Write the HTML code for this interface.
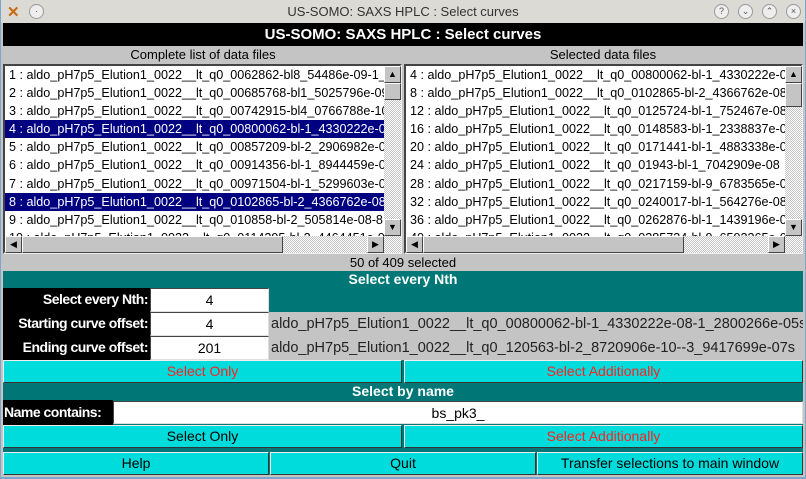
<!DOCTYPE html>
<html><head><meta charset="utf-8"><style>
*{box-sizing:border-box;margin:0;padding:0}
body{width:806px;height:479px;overflow:hidden;background:#7fa6c9;font-family:"Liberation Sans",sans-serif;position:relative}
.abs{position:absolute}
#win{left:1px;top:0;width:804px;height:477px;background:#c4c4c4}
#tb{left:1px;top:0;width:804px;height:23px;background:#dcdad5;font-size:13px;color:#333;text-align:center;line-height:23px}
.circ{width:15px;height:15px;border-radius:50%;border:1px solid #999;background:#eee;top:4px;font-size:9px;line-height:13px;text-align:center;color:#555}
#hdr{left:3px;top:23px;width:800px;height:23px;background:#000;color:#fff;font-weight:bold;font-size:15px;text-align:center;line-height:23px}
.lab{top:46px;height:18px;font-size:13px;text-align:center;line-height:18px;color:#000}
.list{top:64px;height:190px;background:#fff;border:2px solid;border-color:#444 #eee #eee #444;overflow:hidden;padding-top:0px}
.row{height:18.1px;line-height:18.1px;font-size:12.6px;white-space:nowrap;padding-left:4px;color:#000}
.sel{background:#000080;color:#fff}
.vs{width:17px;background:repeating-conic-gradient(#c4c4c4 0 25%,#fff 0 50%) 0 0/2px 2px}
.hs{height:17px;background:repeating-conic-gradient(#c4c4c4 0 25%,#fff 0 50%) 0 0/2px 2px}
.btnb{background:#c4c4c4;border:1px solid;border-color:#fff #444 #444 #fff;font-size:9px;text-align:center;line-height:14px}
.teal{background:#007777}
.blk{background:#000;color:#fff;font-size:14px;font-weight:bold;letter-spacing:-0.5px;text-align:right;padding-right:2px;line-height:23px;white-space:nowrap}
.inp{background:#fff;border:1px solid;border-color:#444 #ddd #ddd #444;text-align:center;font-size:14px;line-height:22px}
.cb{background:#00dcdc;border:1px solid;border-color:#eee #333 #333 #eee;text-align:center;font-size:14px;line-height:20px;color:#000}
.red{color:#ff2020}
</style></head><body>
<div id="win" class="abs"></div>
<div id="tb" class="abs">US-SOMO: SAXS HPLC : Select curves</div>
<div class="abs" style="left:7px;top:3px;font-size:15px;color:#c86a10;font-weight:bold">✕</div>
<div class="abs circ" style="left:29px">·</div>
<div class="abs circ" style="left:714px">?</div>
<div class="abs circ" style="left:738px">⌄</div>
<div class="abs circ" style="left:762px">⌃</div>
<div class="abs circ" style="left:786px">×</div>
<div id="hdr" class="abs">US-SOMO: SAXS HPLC : Select curves</div>
<div class="abs lab" style="left:3px;width:400px">Complete list of data files</div>
<div class="abs lab" style="left:404px;width:398px">Selected data files</div>

<div class="abs list" style="left:3px;width:399px">
<div class="row">1 : aldo_pH7p5_Elution1_0022__lt_q0_0062862-bl8_54486e-09-1_</div>
<div class="row">2 : aldo_pH7p5_Elution1_0022__lt_q0_00685768-bl1_5025796e-09</div>
<div class="row">3 : aldo_pH7p5_Elution1_0022__lt_q0_00742915-bl4_0766788e-10</div>
<div class="row sel">4 : aldo_pH7p5_Elution1_0022__lt_q0_00800062-bl-1_4330222e-08</div>
<div class="row">5 : aldo_pH7p5_Elution1_0022__lt_q0_00857209-bl-2_2906982e-08</div>
<div class="row">6 : aldo_pH7p5_Elution1_0022__lt_q0_00914356-bl-1_8944459e-08</div>
<div class="row">7 : aldo_pH7p5_Elution1_0022__lt_q0_00971504-bl-1_5299603e-08</div>
<div class="row sel">8 : aldo_pH7p5_Elution1_0022__lt_q0_0102865-bl-2_4366762e-08</div>
<div class="row">9 : aldo_pH7p5_Elution1_0022__lt_q0_010858-bl-2_505814e-08-8</div>
<div class="row">10 : aldo_pH7p5_Elution1_0022__lt_q0_0114295-bl-2_4464451e-08</div>
</div>
<div class="abs vs" style="left:384px;top:66px;height:170px"></div>
<div class="abs btnb" style="left:384px;top:66px;width:17px;height:17px">▲</div>
<div class="abs btnb" style="left:384px;top:83px;width:17px;height:17px"></div>
<div class="abs btnb" style="left:384px;top:219px;width:17px;height:17px">▼</div>
<div class="abs hs" style="left:5px;top:236px;width:396px"></div>
<div class="abs btnb" style="left:5px;top:236px;width:17px;height:17px">◀</div>
<div class="abs btnb" style="left:22px;top:236px;width:261px;height:17px"></div>
<div class="abs btnb" style="left:367px;top:236px;width:17px;height:17px">▶</div>

<div class="abs list" style="left:404px;width:399px">
<div class="row">4 : aldo_pH7p5_Elution1_0022__lt_q0_00800062-bl-1_4330222e-08</div>
<div class="row">8 : aldo_pH7p5_Elution1_0022__lt_q0_0102865-bl-2_4366762e-08</div>
<div class="row">12 : aldo_pH7p5_Elution1_0022__lt_q0_0125724-bl-1_752467e-08</div>
<div class="row">16 : aldo_pH7p5_Elution1_0022__lt_q0_0148583-bl-1_2338837e-08</div>
<div class="row">20 : aldo_pH7p5_Elution1_0022__lt_q0_0171441-bl-1_4883338e-08</div>
<div class="row">24 : aldo_pH7p5_Elution1_0022__lt_q0_01943-bl-1_7042909e-08</div>
<div class="row">28 : aldo_pH7p5_Elution1_0022__lt_q0_0217159-bl-9_6783565e-09</div>
<div class="row">32 : aldo_pH7p5_Elution1_0022__lt_q0_0240017-bl-1_564276e-08</div>
<div class="row">36 : aldo_pH7p5_Elution1_0022__lt_q0_0262876-bl-1_1439196e-08</div>
<div class="row">40 : aldo_pH7p5_Elution1_0022__lt_q0_0285734-bl-9_6592365e-09</div>
</div>
<div class="abs vs" style="left:785px;top:66px;height:170px"></div>
<div class="abs btnb" style="left:785px;top:66px;width:17px;height:17px">▲</div>
<div class="abs btnb" style="left:785px;top:83px;width:17px;height:24px"></div>
<div class="abs btnb" style="left:785px;top:219px;width:17px;height:17px">▼</div>
<div class="abs hs" style="left:406px;top:236px;width:396px"></div>
<div class="abs btnb" style="left:406px;top:236px;width:17px;height:17px">◀</div>
<div class="abs btnb" style="left:423px;top:236px;width:261px;height:17px"></div>
<div class="abs btnb" style="left:768px;top:236px;width:17px;height:17px">▶</div>

<div class="abs" style="left:3px;top:254px;width:800px;height:17px;font-size:13px;text-align:center;line-height:17px">50 of 409 selected</div>
<div class="abs teal" style="left:3px;top:271px;width:800px;height:204px"></div>
<div class="abs" style="left:3px;top:271px;width:800px;height:17px;color:#fff;font-weight:bold;font-size:14px;text-align:center;line-height:16px">Select every Nth</div>

<div class="abs blk" style="left:3px;top:288px;width:147px;height:72px"></div>
<div class="abs blk" style="left:3px;top:288px;width:147px">Select every Nth:</div>
<div class="abs blk" style="left:3px;top:312px;width:147px">Starting curve offset:</div>
<div class="abs blk" style="left:3px;top:336px;width:147px">Ending curve offset:</div>
<div class="abs inp" style="left:150px;top:288px;width:119px;height:24px">4</div>
<div class="abs inp" style="left:150px;top:312px;width:119px;height:24px">4</div>
<div class="abs inp" style="left:150px;top:336px;width:119px;height:24px">201</div>
<div class="abs" style="left:269px;top:312px;width:534px;height:48px;background:#c4c4c4;font-size:14.5px;color:#222;padding-left:2px;line-height:24px;white-space:nowrap;overflow:hidden">aldo_pH7p5_Elution1_0022__lt_q0_00800062-bl-1_4330222e-08-1_2800266e-05s<br>aldo_pH7p5_Elution1_0022__lt_q0_120563-bl-2_8720906e-10--3_9417699e-07s</div>

<div class="abs cb red" style="left:3px;top:360px;width:399px;height:23px">Select Only</div>
<div class="abs cb red" style="left:404px;top:360px;width:399px;height:23px">Select Additionally</div>
<div class="abs" style="left:3px;top:383px;width:800px;height:17px;color:#fff;font-weight:bold;font-size:14px;text-align:center;line-height:17px">Select by name</div>
<div class="abs blk" style="left:3px;top:400px;width:110px;height:25px;text-align:left;padding-left:1px;line-height:25px">Name contains:</div>
<div class="abs inp" style="left:113px;top:401px;width:690px;height:23px">bs_pk3_</div>
<div class="abs cb" style="left:3px;top:425px;width:399px;height:23px">Select Only</div>
<div class="abs cb red" style="left:404px;top:425px;width:399px;height:23px">Select Additionally</div>
<div class="abs cb" style="left:3px;top:452px;width:266px;height:23px">Help</div>
<div class="abs cb" style="left:270px;top:452px;width:266px;height:23px">Quit</div>
<div class="abs cb" style="left:537px;top:452px;width:266px;height:23px">Transfer selections to main window</div>
</body></html>
